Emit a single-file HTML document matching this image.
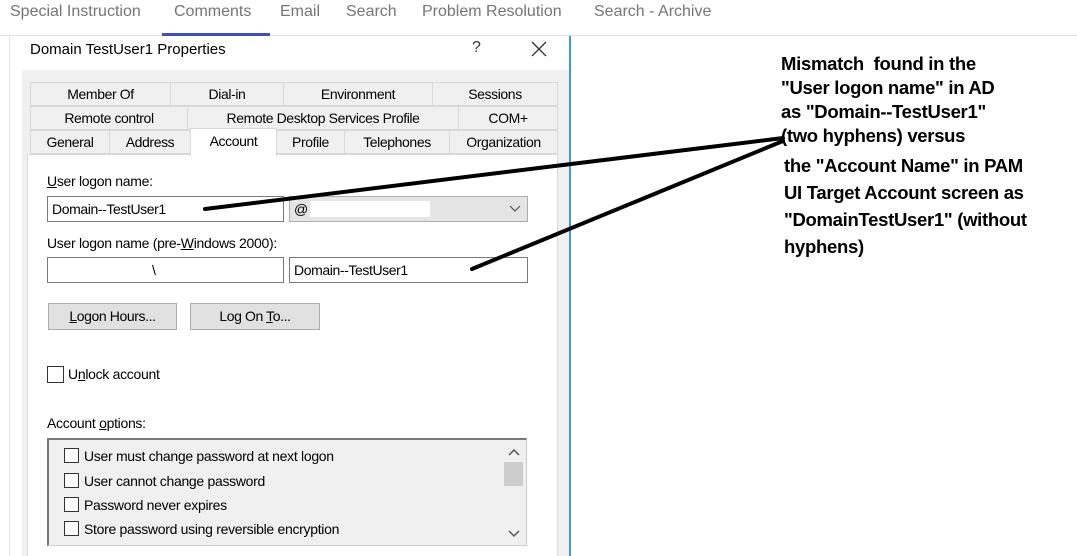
<!DOCTYPE html>
<html><head><style>
*{margin:0;padding:0;box-sizing:border-box}
body{width:1077px;height:556px;overflow:hidden;background:#fff;position:relative;font-family:"Liberation Sans",sans-serif}
.a{position:absolute}
.nav{font-size:16px;color:#757575;top:3px}
.w{font-size:14px;color:#000;letter-spacing:-0.3px;white-space:nowrap}
.tab{position:absolute;height:24px;border:1px solid #d9d9d9;background:#f0f0f0;font-size:14px;letter-spacing:-0.4px;text-align:center;line-height:22px;color:#000}
.in{position:absolute;height:26px;border:1px solid #7a7a7a;background:#fff;font-size:14px;letter-spacing:-0.4px;padding-left:4px;line-height:24px}
.btn{position:absolute;height:27px;border:1px solid #adadad;background:#e1e1e1;font-size:14px;letter-spacing:-0.4px;text-align:center;line-height:25px}
.cb{position:absolute;width:15px;height:15px;border:1px solid #333;background:#fff}
.ann{position:absolute;font-weight:bold;font-size:18.5px;color:#000;white-space:nowrap;letter-spacing:-0.3px}
</style></head><body>
<div class="a nav" style="left:10px">Special Instruction</div>
<div class="a nav" style="left:174px">Comments</div>
<div class="a nav" style="left:280px">Email</div>
<div class="a nav" style="left:346px">Search</div>
<div class="a nav" style="left:422px">Problem Resolution</div>
<div class="a nav" style="left:594px">Search - Archive</div>
<div class="a" style="left:0;top:35px;width:1077px;height:1px;background:#e0e0e0"></div>
<div class="a" style="left:162px;top:33px;width:108px;height:3px;background:#3f51b5"></div>

<div class="a" style="left:9px;top:36px;width:1px;height:520px;background:#e4e4e4"></div>
<div class="a" style="left:569px;top:36px;width:2px;height:520px;background:#3c98e0"></div>
<div class="a" style="left:22px;top:70px;width:547px;height:486px;background:#f0f0f0"></div>
<div class="a w" style="left:30px;top:41px;font-size:15px;letter-spacing:0">Domain TestUser1 Properties</div>
<div class="a" style="left:472px;top:39px;font-size:16px;color:#333">?</div>
<svg class="a" style="left:531px;top:41px" width="16" height="16"><path d="M1 1L15 15M15 1L1 15" stroke="#333" stroke-width="1.3"/></svg>

<div class="tab" style="left:30px;top:82px;width:141px">Member Of</div>
<div class="tab" style="left:170px;top:82px;width:114px">Dial-in</div>
<div class="tab" style="left:283px;top:82px;width:150px">Environment</div>
<div class="tab" style="left:432px;top:82px;width:126px">Sessions</div>
<div class="tab" style="left:30px;top:106px;width:158px">Remote control</div>
<div class="tab" style="left:187px;top:106px;width:272px">Remote Desktop Services Profile</div>
<div class="tab" style="left:458px;top:106px;width:100px">COM+</div>
<div class="tab" style="left:30px;top:130px;width:80px">General</div>
<div class="tab" style="left:109px;top:130px;width:82px">Address</div>
<div class="tab" style="left:276px;top:130px;width:69px">Profile</div>
<div class="tab" style="left:344px;top:130px;width:106px">Telephones</div>
<div class="tab" style="left:449px;top:130px;width:109px">Organization</div>
<div class="a" style="left:27px;top:154px;width:531px;height:402px;background:#fff;border:1px solid #d9d9d9;border-bottom:none"></div>
<div class="tab" style="left:190px;top:128px;width:87px;height:28px;background:#fff;border-bottom:none;line-height:24px">Account</div>

<div class="a w" style="left:47px;top:173px"><u>U</u>ser logon name:</div>
<div class="in" style="left:47px;top:196px;width:237px">Domain--TestUser1</div>
<div class="in" style="left:289px;top:196px;width:239px;background:#e5e5e5;border-color:#adadad">@</div>
<div class="a" style="left:310px;top:201px;width:120px;height:16px;background:#fff"></div>
<svg class="a" style="left:509px;top:205px" width="12" height="8"><path d="M1 1L6 6L11 1" stroke="#555" fill="none" stroke-width="1.2"/></svg>
<div class="a w" style="left:47px;top:235px">User logon name (pre-<u>W</u>indows 2000):</div>
<div class="in" style="left:47px;top:257px;width:237px"><span style="margin-left:100px">\</span></div>
<div class="in" style="left:289px;top:257px;width:239px">Domain--TestUser1</div>
<div class="btn" style="left:48px;top:303px;width:129px"><u>L</u>ogon Hours...</div>
<div class="btn" style="left:190px;top:303px;width:130px">Log On <u>T</u>o...</div>
<div class="cb" style="left:47px;top:366px;width:17px;height:17px"></div>
<div class="a w" style="left:68px;top:366px">U<u>n</u>lock account</div>
<div class="a w" style="left:47px;top:415px">Account <u>o</u>ptions:</div>
<div class="a" style="left:47px;top:438px;width:480px;height:108px;background:#f0f0f0;border:1px solid #ccc;border-top:2px solid #777;border-left:2px solid #777"></div>
<div class="a" style="left:504px;top:462px;width:19px;height:24px;background:#cdcdcd"></div>
<svg class="a" style="left:508px;top:449px" width="12" height="8"><path d="M1 6L6 1L11 6" stroke="#555" fill="none" stroke-width="1.5"/></svg>
<svg class="a" style="left:508px;top:530px" width="12" height="8"><path d="M1 1L6 6L11 1" stroke="#555" fill="none" stroke-width="1.5"/></svg>
<div class="cb" style="left:64px;top:448px"></div><div class="a w" style="left:84px;top:448px">User must change password at next logon</div>
<div class="cb" style="left:64px;top:473px"></div><div class="a w" style="left:84px;top:473px">User cannot change password</div>
<div class="cb" style="left:64px;top:497px"></div><div class="a w" style="left:84px;top:497px">Password never expires</div>
<div class="cb" style="left:64px;top:521px"></div><div class="a w" style="left:84px;top:521px">Store password using reversible encryption</div>

<svg class="a" style="left:0;top:0" width="1077" height="556"><path d="M205 209L783 138M472 269L783 141" stroke="#000" stroke-width="4" fill="none" stroke-linecap="round"/></svg>

<div class="ann" style="left:781px;top:53px">Mismatch&nbsp; found in the</div>
<div class="ann" style="left:781px;top:77px">"User logon name" in AD</div>
<div class="ann" style="left:781px;top:101px">as "Domain--TestUser1"</div>
<div class="ann" style="left:781px;top:125px">(two hyphens) versus</div>
<div class="ann" style="left:784px;top:155px">the "Account Name" in PAM</div>
<div class="ann" style="left:784px;top:182px">UI Target Account screen as</div>
<div class="ann" style="left:784px;top:209px">"DomainTestUser1" (without</div>
<div class="ann" style="left:784px;top:236px">hyphens)</div>
</body></html>
